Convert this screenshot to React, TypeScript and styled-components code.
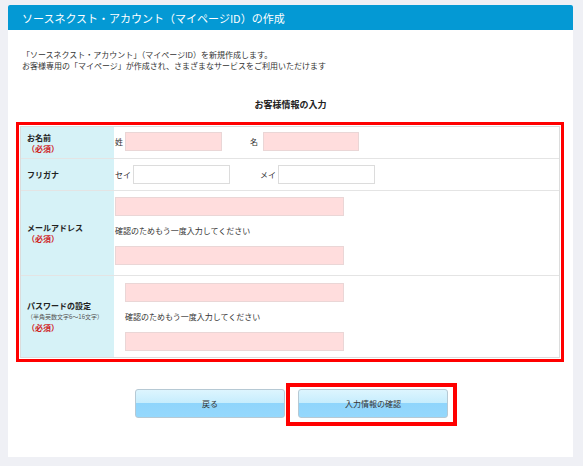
import styled, { createGlobalStyle } from 'styled-components';

const GlobalStyle = createGlobalStyle`
  body {
    margin: 0;
    background-color: #eff0f5;
    font-family: "Noto Sans CJK JP", "Noto Sans", sans-serif;
    color: #333;
  }
`;

const Page = styled.div`
  padding: 5px 10px 0 8px;
  height: 466px;
  box-sizing: border-box;
`;

const Card = styled.div`
  background-color: #fff;
  height: 452px;
  display: flex;
  flex-direction: column;
`;

const Header = styled.div`
  height: 25px;
  background-color: #0499d4;
  border-radius: 2px 2px 0 0;
  color: #fff;
  font-size: 11px;
  line-height: 25px;
  padding-left: 14px;
  padding-top: 1px;
  box-sizing: border-box;
`;

const Intro = styled.div`
  padding: 19px 0 0 14px;
  font-size: 8px;
  line-height: 11px;
  color: #333;
  p {
    margin: 0;
  }
`;

const SectionTitle = styled.h2`
  margin: 27px 0 11px;
  font-size: 9px;
  line-height: 13px;
  font-weight: bold;
  text-align: center;
  color: #222;
`;

const Frame = styled.div`
  margin: 0 9px 0 8px;
  border: 3px solid #f00;
  padding: 1px;
`;

const Table = styled.div`
  border: 1px solid #dcdcdc;
`;

const Row = styled.div`
  display: grid;
  grid-template-columns: 93px 1fr;
  border-bottom: 1px solid #e4e4e4;
  &:last-child {
    border-bottom: none;
  }
`;

const LabelCell = styled.div`
  background-color: #d6f2f7;
  padding-left: 6px;
  display: flex;
  flex-direction: column;
  justify-content: center;
  font-size: 8px;
  line-height: 11px;
`;

const LabelText = styled.span`
  font-weight: bold;
  color: #222;
`;

const Required = styled.span`
  color: #d0201c;
  font-weight: bold;
`;

const Hint = styled.span`
  font-size: 6px;
  line-height: 11px;
  color: #555;
`;

const ValueCell = styled.div<{ $indent?: number; $pad: string; $stack?: boolean }>`
  padding: ${(p) => p.$pad};
  padding-left: ${(p) => p.$indent ?? 1}px;
  display: flex;
  flex-direction: ${(p) => (p.$stack ? 'column' : 'row')};
  align-items: ${(p) => (p.$stack ? 'flex-start' : 'center')};
  font-size: 8px;
`;

const Pair = styled.span<{ $offset?: number }>`
  display: inline-flex;
  align-items: center;
  margin-left: ${(p) => p.$offset ?? 0}px;
  font-size: 8px;
  color: #333;
`;

const TextInput = styled.input<{ $pink?: boolean; $w: number; $gap?: number }>`
  box-sizing: border-box;
  width: ${(p) => p.$w}px;
  height: 19px;
  margin: 0 0 0 ${(p) => p.$gap ?? 0}px;
  padding: 0 4px;
  border: 1px solid ${(p) => (p.$pink ? '#ead6d6' : '#dcdcdc')};
  background-color: ${(p) => (p.$pink ? '#ffdddd' : '#fff')};
  outline: none;
`;

const Note = styled.div`
  height: 30px;
  line-height: 30px;
  font-size: 8px;
  color: #333;
`;

const Buttons = styled.div`
  display: flex;
  justify-content: center;
  gap: 13px;
  margin-top: 27px;
  padding-left: 2px;
`;

const Button = styled.button`
  width: 150px;
  height: 29px;
  border: 1px solid #b6c9d4;
  border-radius: 3px;
  background: linear-gradient(to bottom, #ddf5fe 0%, #c6edfd 48%, #8fd5fc 50%, #95d8fc 100%);
  font-family: inherit;
  font-size: 8px;
  color: #333;
  cursor: pointer;
`;

const Highlight = styled.span`
  position: relative;
  display: inline-flex;
  &::after {
    content: '';
    position: absolute;
    top: -6px;
    bottom: -8px;
    left: -12px;
    right: -9px;
    border: 4px solid #f00;
    pointer-events: none;
  }
`;

export default function App() {
  return (
    <Page>
      <GlobalStyle />
      <Card>
        <Header>ソースネクスト・アカウント（マイページID）の作成</Header>
        <Intro>
          <p>「ソースネクスト・アカウント」（マイページID）を新規作成します。</p>
          <p>お客様専用の「マイページ」が作成され、さまざまなサービスをご利用いただけます</p>
        </Intro>
        <SectionTitle>お客様情報の入力</SectionTitle>
        <Frame>
          <Table>
            <Row>
              <LabelCell>
                <LabelText>お名前</LabelText>
                <Required>（必須）</Required>
              </LabelCell>
              <ValueCell $pad="5px 0 7px">
                <Pair>
                  姓<TextInput $pink $w={97} $gap={2} />
                </Pair>
                <Pair $offset={28}>
                  名<TextInput $pink $w={96} $gap={5} />
                </Pair>
              </ValueCell>
            </Row>
            <Row>
              <LabelCell>
                <LabelText>フリガナ</LabelText>
              </LabelCell>
              <ValueCell $pad="6px 0 6px">
                <Pair>
                  セイ<TextInput $w={97} $gap={2} />
                </Pair>
                <Pair $offset={30}>
                  メイ<TextInput $w={97} $gap={2} />
                </Pair>
              </ValueCell>
            </Row>
            <Row>
              <LabelCell>
                <LabelText>メールアドレス</LabelText>
                <Required>（必須）</Required>
              </LabelCell>
              <ValueCell $pad="6px 0 10px" $stack>
                <TextInput $pink $w={229} />
                <Note>確認のためもう一度入力してください</Note>
                <TextInput $pink $w={229} />
              </ValueCell>
            </Row>
            <Row>
              <LabelCell>
                <LabelText>パスワードの設定</LabelText>
                <Hint>（半角英数文字6〜16文字）</Hint>
                <Required>（必須）</Required>
              </LabelCell>
              <ValueCell $pad="7px 0 6px" $indent={11} $stack>
                <TextInput $pink $w={219} />
                <Note>確認のためもう一度入力してください</Note>
                <TextInput $pink $w={219} />
              </ValueCell>
            </Row>
          </Table>
        </Frame>
        <Buttons>
          <Button>戻る</Button>
          <Highlight>
            <Button>入力情報の確認</Button>
          </Highlight>
        </Buttons>
      </Card>
    </Page>
  );
}
